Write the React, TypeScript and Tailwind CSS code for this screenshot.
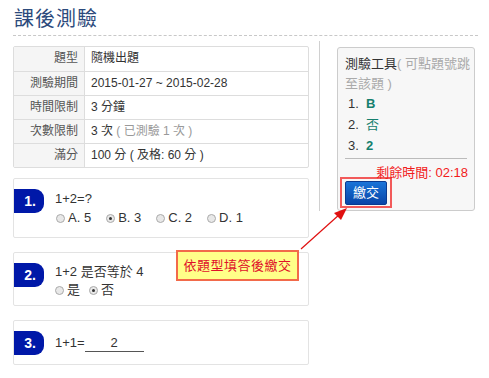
import React from 'react';

const rows: { label: string; value: React.ReactNode }[] = [
  { label: '題型', value: '隨機出題' },
  { label: '測驗期間', value: '2015-01-27 ~ 2015-02-28' },
  { label: '時間限制', value: '3 分鐘' },
  { label: '次數限制', value: <>3 次 <span className="text-[#999]">( 已測驗 1 次 )</span></> },
  { label: '滿分', value: '100 分 ( 及格: 60 分 )' },
];

const Radio = ({ checked }: { checked?: boolean }) => (
  <span className="inline-flex w-[9px] h-[9px] rounded-full border border-[#aaa] bg-[#e8e8e8] items-center justify-center mr-[3px]">
    {checked && <span className="w-[3px] h-[3px] rounded-full bg-[#333]" />}
  </span>
);

const Badge = ({ n }: { n: number }) => (
  <div className="w-[30px] h-[24px] bg-[#0018a8] rounded-r-[9px] flex items-center justify-end pr-[8px] text-white font-bold text-[14px] shrink-0">
    {n}.
  </div>
);

const App: React.FC = () => {
  return (
    <div className="relative w-[489px] h-[378px] bg-white px-[13px] pt-[7px] text-[12px] text-[#333] font-['Liberation_Sans','Noto_Sans_CJK_TC',sans-serif] overflow-hidden">
      <h1 className="text-[20px] leading-[24px] text-[#2c4a7c] tracking-[1px] pl-[1px]">課後測驗</h1>
      <div className="mt-[4px] w-[465px] border-b border-dashed border-[#c8c8c8]" />

      <div className="flex">
        {/* left */}
        <div className="w-[296px] pt-[10px]">
          <div className="border border-[#ddd] rounded-[2px]">
            {rows.map((r, i) => (
              <div key={r.label} className={`flex h-[24px] ${i > 0 ? 'border-t border-[#ddd]' : ''}`}>
                <div className="w-[71px] bg-[#f5f5f5] border-r border-[#ddd] text-right pr-[6px] leading-[23px] text-[#555]">{r.label}</div>
                <div className="pl-[6px] leading-[23px]">{r.value}</div>
              </div>
            ))}
          </div>

          <div className="mt-[10px] h-[60px] border border-[#e3e3e3] rounded-[2px] pt-[10px]">
            <div className="flex">
              <Badge n={1} />
              <div className="pl-[11px] pt-[2px]">
                <div className="leading-[16px] text-[13px]">1+2=?</div>
                <div className="flex items-center gap-[15px] mt-[4px] text-[13px] leading-[14px] pl-[1px]">
                  <span className="flex items-center"><Radio />A. 5</span>
                  <span className="flex items-center"><Radio checked />B. 3</span>
                  <span className="flex items-center"><Radio />C. 2</span>
                  <span className="flex items-center"><Radio />D. 1</span>
                </div>
              </div>
            </div>
          </div>

          <div className="mt-[14px] h-[54px] border border-[#e3e3e3] rounded-[2px] pt-[10px]">
            <div className="flex">
              <Badge n={2} />
              <div className="pl-[11px] pt-[1px]">
                <div className="leading-[16px] text-[13px]">1+2 是否等於 4</div>
                <div className="flex items-center gap-[9px] mt-[2px] text-[13px] leading-[16px]">
                  <span className="flex items-center"><Radio />是</span>
                  <span className="flex items-center"><Radio checked />否</span>
                </div>
              </div>
            </div>
          </div>

          <div className="mt-[14px] h-[45px] border border-[#e3e3e3] rounded-[2px] pt-[10px]">
            <div className="flex items-center">
              <Badge n={3} />
              <div className="pl-[11px] flex items-center text-[13px]">
                1+1=
                <span className="inline-block w-[59px] border-b border-[#555] text-center leading-[16px]">2</span>
              </div>
            </div>
          </div>
        </div>

        {/* divider */}
        <div className="ml-[10px] mt-[5px] w-px h-[170px] bg-[#d0d0d0]" />

        {/* right panel */}
        <div className="ml-[17px] mt-[11px] w-[138px] h-[164px] bg-[#f7f7f7] border border-[#ccc] rounded-[3px] pl-[7px] pr-[2px] pt-[6px]">
          <div className="text-[13px] leading-[20px]">
            測驗工具<span className="text-[#aaa]">( 可點題號跳至該題 )</span>
          </div>
          <div className="pl-[3px] text-[13px] leading-[21px] -mt-[1px]">
            <div>1.&nbsp; <span className="text-[#15806e] font-bold">B</span></div>
            <div>2.&nbsp; <span className="text-[#15806e]">否</span></div>
            <div>3.&nbsp; <span className="text-[#15806e] font-bold">2</span></div>
          </div>
          <div className="mt-[2px] mr-[5px] border-t border-[#bbb]" />
          <div className="text-right text-[13px] text-[#f21c1c] leading-[18px] mt-[5px] mr-[4px]">剩餘時間: 02:18</div>
          <div className="-ml-[5px] mt-[-5px] w-[52px] h-[31px] border-2 border-[#f25a5a] flex items-center justify-center">
            <button className="w-[42px] h-[24px] rounded-[2px] bg-gradient-to-b from-[#1a74d8] to-[#0a45a8] border border-[#0a3a90] text-white text-[13px] leading-[20px]">繳交</button>
          </div>
        </div>
      </div>

      {/* callout */}
      <div className="absolute left-[176px] top-[250px] w-[123px] h-[31px] bg-[#ffff88] border-2 border-[#f26a4a] flex items-center justify-center text-[#e0102a] text-[13px] tracking-[0.5px]">
        依題型填答後繳交
      </div>
      <svg className="absolute left-0 top-0" width="489" height="378">
        <line x1="301" y1="249" x2="340" y2="214" stroke="#e01010" strokeWidth="1.2" />
        <polygon points="347,208 334,213 341,220" fill="#e01010" />
      </svg>
    </div>
  );
};

export default App;
